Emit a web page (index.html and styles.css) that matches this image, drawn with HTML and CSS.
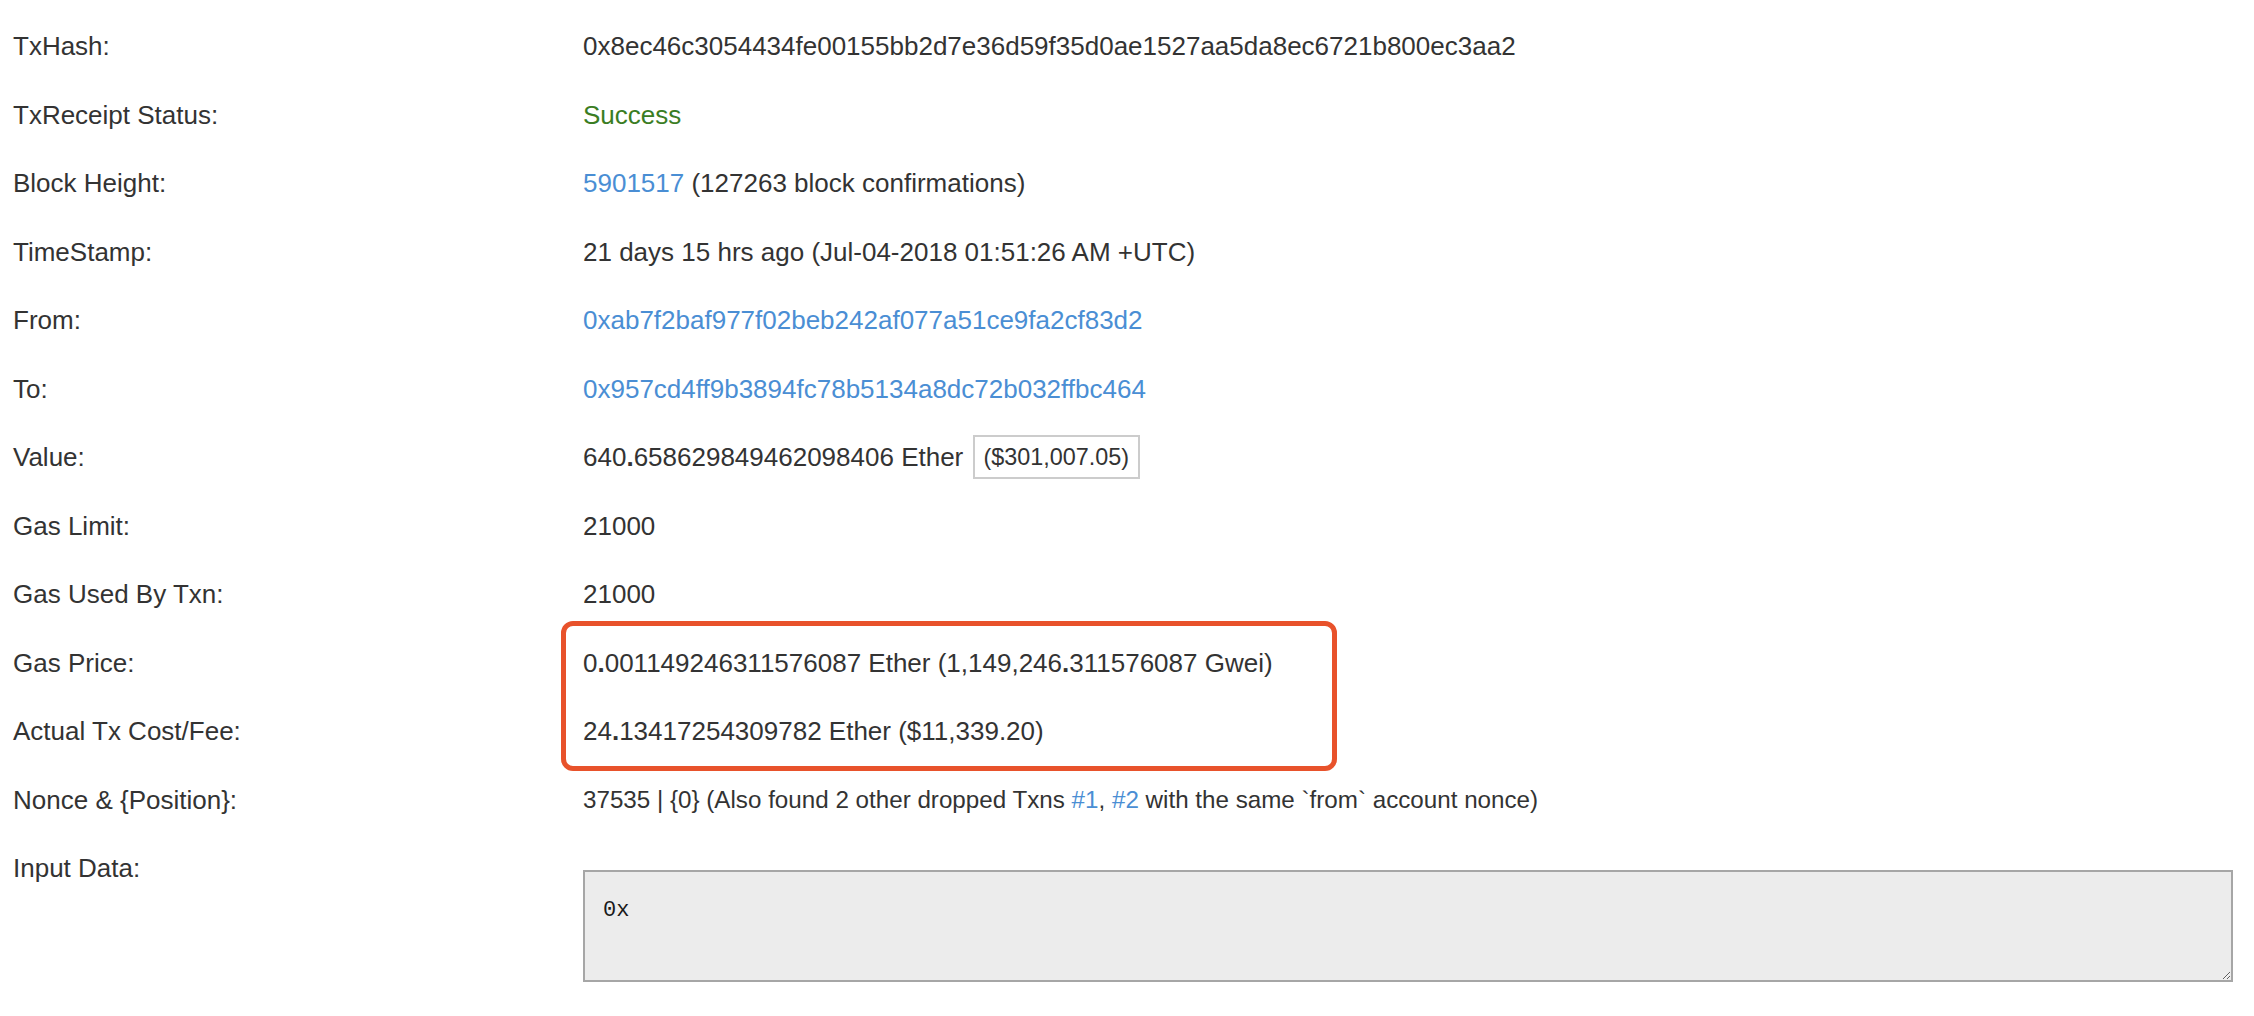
FILE: index.html
```html
<!DOCTYPE html>
<html>
<head>
<meta charset="utf-8">
<link rel="stylesheet" href="styles.css">
</head>
<body>
<div class="details">
  <div class="row"><div class="label">TxHash:</div><div class="value">0x8ec46c3054434fe00155bb2d7e36d59f35d0ae1527aa5da8ec6721b800ec3aa2</div></div>
  <div class="row"><div class="label">TxReceipt Status:</div><div class="value"><span class="success">Success</span></div></div>
  <div class="row"><div class="label">Block Height:</div><div class="value"><a class="link" href="#">5901517</a> (127263 block confirmations)</div></div>
  <div class="row"><div class="label">TimeStamp:</div><div class="value">21 days 15 hrs ago (Jul-04-2018 01:51:26 AM +UTC)</div></div>
  <div class="row"><div class="label">From:</div><div class="value"><a class="link" href="#">0xab7f2baf977f02beb242af077a51ce9fa2cf83d2</a></div></div>
  <div class="row"><div class="label">To:</div><div class="value"><a class="link" href="#">0x957cd4ff9b3894fc78b5134a8dc72b032ffbc464</a></div></div>
  <div class="row"><div class="label">Value:</div><div class="value">640<b>.</b>658629849462098406 Ether <span class="badge">($301,007.05)</span></div></div>
  <div class="row"><div class="label">Gas Limit:</div><div class="value">21000</div></div>
  <div class="row"><div class="label">Gas Used By Txn:</div><div class="value">21000</div></div>
  <div class="highlight">
    <div class="row"><div class="label">Gas Price:</div><div class="value">0<b>.</b>001149246311576087 Ether (1,149,246<b>.</b>311576087 Gwei)</div></div>
    <div class="row"><div class="label">Actual Tx Cost/Fee:</div><div class="value">24<b>.</b>13417254309782 Ether ($11,339.20)</div></div>
  </div>
  <div class="row"><div class="label">Nonce &amp; {Position}:</div><div class="value nonce">37535 | {0} (Also found 2 other dropped Txns <a class="link" href="#">#1</a>, <a class="link" href="#">#2</a> with the same `from` account nonce)</div></div>
  <div class="row row-input"><div class="label">Input Data:</div><div class="value"><textarea class="input-data" readonly>0x</textarea></div></div>
</div>
</body>
</html>
```
FILE: styles.css
```css
html, body {
  margin: 0;
  padding: 0;
  background: #ffffff;
}
body {
  font-family: "Liberation Sans", Arial, Helvetica, sans-serif;
  font-size: 26px;
  color: #333333;
}
.details {
  padding: 12px 21px 0 13px;
}
.row {
  display: grid;
  grid-template-columns: 570px 1fr;
  height: 68.5px;
  line-height: 68.5px;
  white-space: nowrap;
}
.value b {
  font-weight: bold;
}
.nonce {
  font-size: 24.2px;
}
.success {
  color: #3a7d23;
}
.link {
  color: #4a8ed4;
  text-decoration: none;
}
.badge {
  display: inline-block;
  border: 2px solid #cccccc;
  height: 40px;
  line-height: 40px;
  padding: 0 9px;
  margin-left: 2px;
  font-size: 23.4px;
  vertical-align: middle;
  position: relative;
  top: -2px;
}
.highlight {
  position: relative;
}
.highlight::after {
  content: "";
  position: absolute;
  left: 548px;
  top: -8px;
  width: 766px;
  height: 140px;
  border: 5px solid #e8522b;
  border-radius: 12px;
  pointer-events: none;
}
.row-input {
  height: auto;
}
.row-input .value {
  padding-top: 36px;
  line-height: normal;
}
.input-data {
  display: block;
  box-sizing: border-box;
  width: 100%;
  height: 112px;
  margin: 0;
  border: 2px solid #a6a6a6;
  background: #ececec;
  font-family: "Liberation Mono", "Courier New", monospace;
  font-size: 22px;
  color: #1a1a1a;
  padding: 26px 18px;
  resize: both;
  outline: none;
}
```
